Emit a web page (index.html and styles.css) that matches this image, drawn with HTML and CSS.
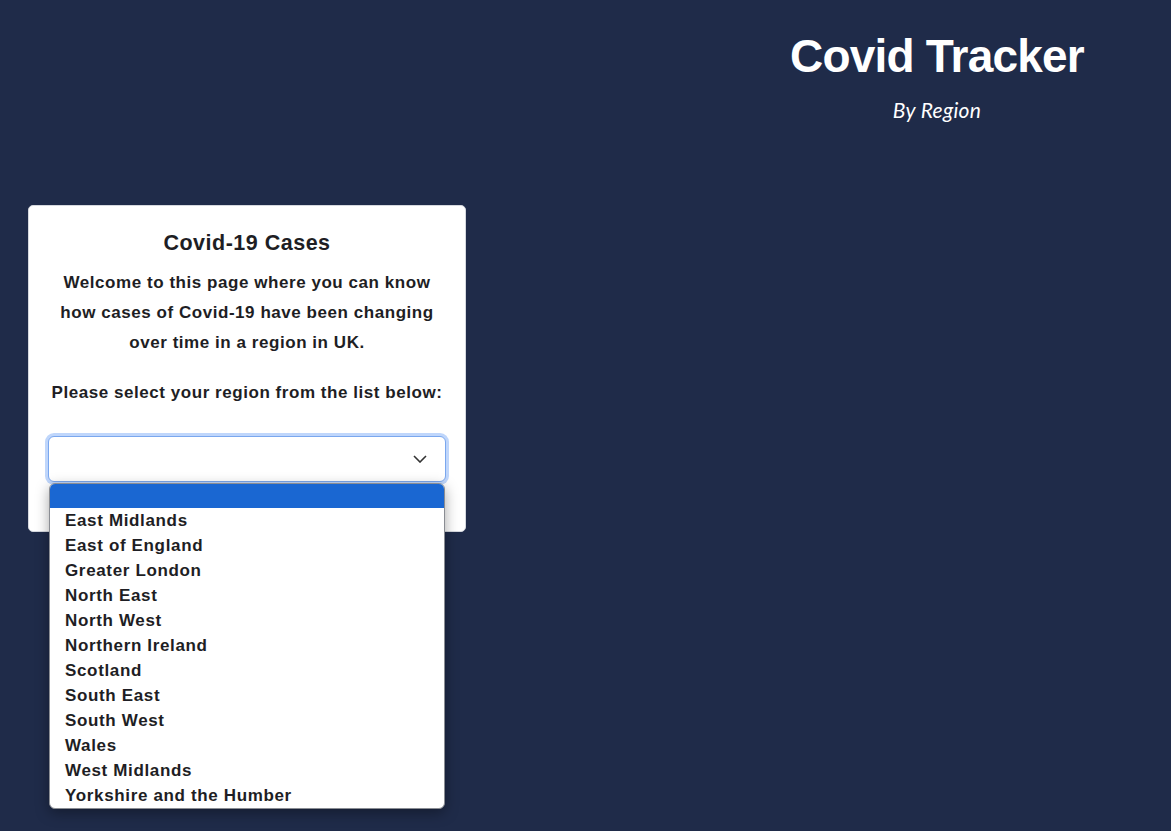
FILE: index.html
```html
<!DOCTYPE html>
<html lang="en">
<head>
<meta charset="utf-8">
<title>Covid Tracker</title>
<link rel="stylesheet" href="styles.css">
</head>
<body>
<div class="page">
  <header class="header">
    <h1 class="title">Covid Tracker</h1>
    <p class="subtitle">By Region</p>
  </header>
  <main class="main">
    <section class="card">
      <h2 class="card-title">Covid-19 Cases</h2>
      <p class="intro">Welcome to this page where you can know how cases of Covid-19 have been changing over time in a region in UK.</p>
      <p class="prompt">Please select your region from the list below:</p>
      <div class="select-wrap">
        <div class="select">
          <svg class="chevron" width="14" height="8" viewBox="0 0 14 8"><path d="M1 1l6 6 6-6" fill="none" stroke="#333" stroke-width="1.6"/></svg>
        </div>
        <ul class="options">
          <li class="option selected">&nbsp;</li>
          <li class="option">East Midlands</li>
          <li class="option">East of England</li>
          <li class="option">Greater London</li>
          <li class="option">North East</li>
          <li class="option">North West</li>
          <li class="option">Northern Ireland</li>
          <li class="option">Scotland</li>
          <li class="option">South East</li>
          <li class="option">South West</li>
          <li class="option">Wales</li>
          <li class="option">West Midlands</li>
          <li class="option">Yorkshire and the Humber</li>
        </ul>
      </div>
    </section>
  </main>
</div>
</body>
</html>
```
FILE: styles.css
```css
* { box-sizing: border-box; }
html, body {
  margin: 0;
  height: 100%;
}
body {
  background: #1f2b49;
  font-family: "Liberation Sans", Arial, sans-serif;
  color: #1e1e24;
}
.page {
  width: 1171px;
  height: 831px;
  overflow: hidden;
}
.header {
  margin-left: 703px;
  width: 468px;
  text-align: center;
  padding-top: 28px;
}
.title {
  margin: 0;
  font-size: 46px;
  line-height: 56px;
  font-weight: bold;
  letter-spacing: -0.8px;
  color: #ffffff;
}
.subtitle {
  margin: 12px 0 0 0;
  font-family: Lato, "Open Sans", sans-serif;
  font-style: italic;
  font-size: 21px;
  line-height: 28px;
  letter-spacing: 0.3px;
  color: #ffffff;
}
.main {
  padding-top: 81px;
  padding-left: 28px;
}
.card {
  width: 438px;
  height: 327px;
  background: #ffffff;
  border: 1px solid #d5d8de;
  border-radius: 5px;
  padding: 22px 19px 0 19px;
  text-align: center;
}
.card-title {
  margin: 0;
  font-size: 21.5px;
  line-height: 30px;
  font-weight: bold;
  letter-spacing: 0.5px;
}
.intro {
  margin: 10px 0 0 0;
  font-size: 17px;
  line-height: 30px;
  font-weight: bold;
  letter-spacing: 0.55px;
}
.prompt {
  margin: 20px 0 0 0;
  font-size: 17px;
  line-height: 30px;
  font-weight: bold;
  letter-spacing: 0.55px;
  white-space: nowrap;
}
.select-wrap {
  position: relative;
  margin-top: 28px;
}
.select {
  height: 46px;
  border: 1px solid #7aa7ee;
  border-radius: 6px;
  box-shadow: 0 0 0 3px #bfd6fb;
  background: #ffffff;
  display: flex;
  align-items: center;
  justify-content: flex-end;
  padding-right: 18px;
}
.options {
  position: absolute;
  left: 1px;
  top: 47px;
  width: 396px;
  margin: 0;
  padding: 0;
  list-style: none;
  background: #ffffff;
  border: 1px solid #8a8d93;
  border-radius: 6px;
  overflow: hidden;
  text-align: left;
  box-shadow: 0 4px 14px rgba(0, 0, 0, 0.35);
}
.option {
  height: 25px;
  line-height: 25px;
  padding-left: 15px;
  font-size: 17px;
  font-weight: bold;
  letter-spacing: 0.65px;
  color: #1e1e24;
}
.option.selected {
  background: #1a67d2;
  height: 24px;
}
```
